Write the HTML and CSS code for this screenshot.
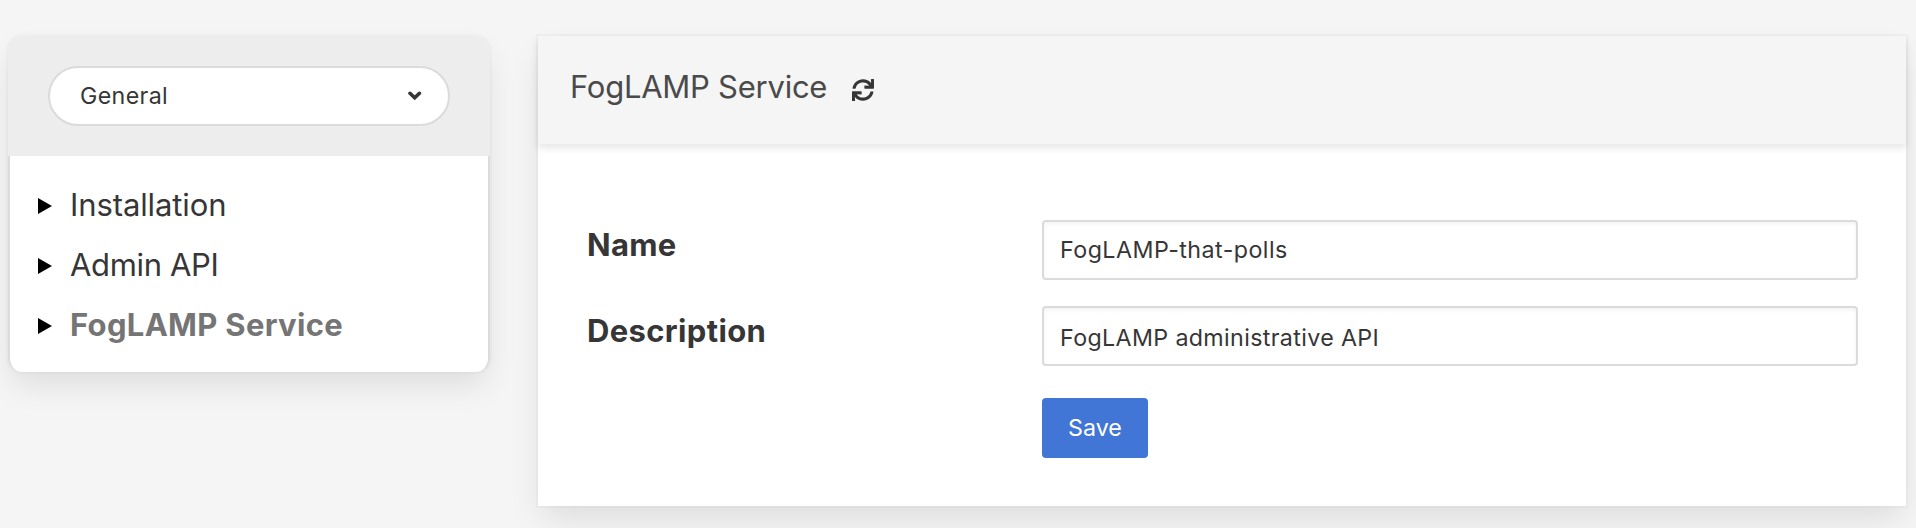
FILE: index.html
```html
<!DOCTYPE html>
<html lang="en">
<head>
<meta charset="utf-8">
<title>FogLAMP Service</title>
<link rel="stylesheet" href="styles.css">
</head>
<body>
<main class="layout">
  <aside class="menu">
    <header class="menu-head">
      <div class="select"><span class="t-general">General</span>
        <svg class="chevron" width="14" height="10" viewBox="0 0 14 10"><path d="M2 2.3 6.7 6.8 11.4 2.3" fill="none" stroke="#363636" stroke-width="3.6" stroke-linecap="round" stroke-linejoin="miter"/></svg>
      </div>
    </header>
    <ul class="tree">
      <li class="node"><svg class="caret" width="14" height="16" viewBox="0 0 14 16"><path d="M0 0 14 8 0 16Z"/></svg><span class="t-install">Installation</span></li>
      <li class="node"><svg class="caret" width="14" height="16" viewBox="0 0 14 16"><path d="M0 0 14 8 0 16Z"/></svg><span class="t-admin">Admin API</span></li>
      <li class="node active"><svg class="caret" width="14" height="16" viewBox="0 0 14 16"><path d="M0 0 14 8 0 16Z"/></svg><span class="t-active">FogLAMP Service</span></li>
    </ul>
  </aside>
  <section class="card">
    <header class="card-head">
      <h1 class="title">FogLAMP Service</h1>
      <svg class="refresh" width="22" height="22" viewBox="0 0 512 512" fill="#363636"><defs><path id="half" d="M440.65 12.57l4 82.77A247.16 247.16 0 0 0 255.83 8C134.73 8 33.91 94.92 12.29 209.82A12 12 0 0 0 24.09 224h49.05a12 12 0 0 0 11.67-9.26 175.91 175.91 0 0 1 317-56.94l-101.46-4.86a12 12 0 0 0-12.57 12v47.41a12 12 0 0 0 12 12H500a12 12 0 0 0 12-12V12a12 12 0 0 0-12-12h-47.37a12 12 0 0 0-11.98 12.57z"/></defs><use href="#half"/><use href="#half" transform="rotate(180 256 256)"/></svg>
    </header>
    <form class="form">
      <label class="label t-name" for="name">Name</label>
      <input class="input t-polls" id="name" value="FogLAMP-that-polls">
      <label class="label t-desc" for="desc">Description</label>
      <input class="input t-api" id="desc" value="FogLAMP administrative API">
      <button class="save" type="button">Save</button>
    </form>
  </section>
</main>
</body>
</html>
```
FILE: styles.css
```css
* { box-sizing: border-box; }
html, body { height: 100%; overflow: hidden; }
body { margin: 0; background: #f5f5f5; color: #363636; font-family: Inter, "Liberation Sans", sans-serif; font-size: 31px; }
.layout { display: flex; align-items: flex-start; gap: 48px; padding: 36px 10px 0 8px; }
.menu { width: 482px; flex: none; border-radius: 14px; box-shadow: 0 16px 32px -4px rgba(10,10,10,.1), 0 0 0 2px rgba(10,10,10,.02); }
.menu-head { height: 120px; padding: 30px 40px 0; background: #ededed; border-radius: 14px 14px 0 0; }
.select { display: flex; align-items: center; justify-content: space-between; height: 60px; padding: 0 26px 0 30px; border: 2px solid #dbdbdb; border-radius: 30px; background: #fff; font-size: 23.25px; }
.t-general { padding-bottom: 2px; letter-spacing: .35px; }
.chevron { display: block; }
.tree { height: 216px; margin: 0; padding: 20px 28px 0; list-style: none; background: #fff; border: solid #dbdbdb; border-width: 0 2px; border-radius: 0 0 14px 14px; }
.node { display: flex; align-items: center; gap: 18px; height: 60px; }
.node span { padding-bottom: 3px; }
.t-install { letter-spacing: -.1px; }
.t-admin { letter-spacing: -.35px; }
.t-active { letter-spacing: .3px; }
.active { color: #757575; font-weight: 700; }
.card { flex: 1; height: 470px; background: #fff; box-shadow: 0 16px 32px -4px rgba(10,10,10,.1), 0 0 0 2px rgba(10,10,10,.02); }
.card-head { display: flex; align-items: flex-start; height: 108px; padding: 27px 32px 0; background: #f5f5f5; box-shadow: 0 4px 8px rgba(10,10,10,.1); }
.title { width: 282px; margin: 0; font-size: 31px; font-weight: 400; line-height: 48px; color: #4a4a4a; white-space: nowrap; letter-spacing: -.25px; }
.refresh { margin-top: 16px; }
.form { display: grid; grid-template-columns: 455px 816px; row-gap: 26px; padding: 76px 0 0 49px; }
.label { height: 60px; line-height: 50px; font-weight: 700; }
.t-name { letter-spacing: .25px; }
.t-desc { letter-spacing: .35px; }
.input { height: 60px; margin: 0; padding: 0 16px; border: 2px solid #dbdbdb; border-radius: 4px; color: #363636; background: #fff; font-family: inherit; font-size: 23.25px; box-shadow: inset 0 2px 4px rgba(10,10,10,.05); outline: 0; }
.t-polls { padding-bottom: 2px; letter-spacing: .45px; }
.t-api { padding-top: 3px; letter-spacing: .35px; }
.save { grid-column: 2; width: 106px; height: 60px; margin-top: 6px; padding: 0 0 2px; border: 0; border-radius: 4px; background: #4175d6; color: #fff; font-family: inherit; font-size: 23.25px; }
```
